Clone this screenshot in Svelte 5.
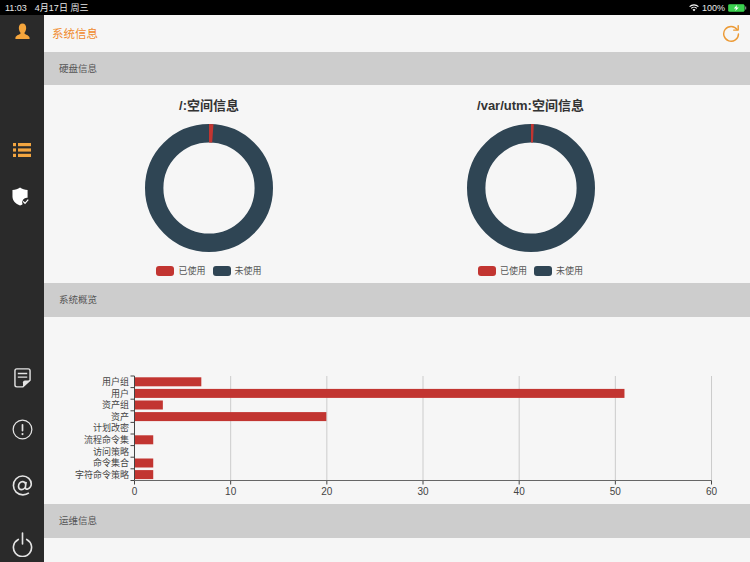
<script>
  const disks = [{ name: '/:空间信息', used: 4 }, { name: '/var/utm:空间信息', used: 2.5 }];
  const x0 = 90.5;
  const unit = 9.617;
  const rows = [
    ['用户组', 7], ['用户', 51], ['资产组', 3], ['资产', 20], ['计划改密', 0],
    ['流程命令集', 2], ['访问策略', 0], ['命令集合', 2], ['字符命令策略', 2]
  ];
  const ticks = [0, 10, 20, 30, 40, 50, 60];
  const rowH = 11.6;
  const top = 59;
  const axisY = 163.5;

  // arc along the top of the ring, from 12 o'clock clockwise
  function slice(deg) {
    const a = (deg * Math.PI) / 180;
    const x = 64 + 54.8 * Math.sin(a);
    const y = 64 - 54.8 * Math.cos(a);
    return `M64 9.2A54.8 54.8 0 0 1 ${x} ${y}`;
  }
</script>

<div class="page">
  <div class="status">
    <span class="time">11:03</span>
    <span class="date">4月17日 周三</span>
    <span class="spacer"></span>
    <svg class="wifi" viewBox="0 0 14 10" width="10" height="8">
      <path d="M7 9.6 4.9 7.3a3 3 0 0 1 4.2 0zM3.7 6.1 2.6 4.9a6.3 6.3 0 0 1 8.8 0l-1.100 1.200a4.700 4.700 0 0 0-6.600 0zM1.400 3.700.3 2.500a9.700 9.700 0 0 1 13.400 0l-1.100 1.200a8.100 8.100 0 0 0-11.200 0z" fill="#fff"/>
    </svg>
    <span class="pct">100%</span>
    <svg class="battery" viewBox="0 0 19 10" width="19" height="10">
      <rect x="0.300" y="1.500" width="16" height="7" rx="1.200" fill="#3bd14f" stroke="#3bd14f" stroke-width="0.600"/>
      <rect x="17.200" y="3.500" width="1" height="3" fill="#999"/>
      <path d="M9 2 5.800 5.500h2.200L7.300 8 10.800 4.500H8.500z" fill="#fff"/>
    </svg>
  </div>

  <div class="shell">
    <aside class="sidebar">
      <svg class="user" viewBox="0 0 18 18" width="15" height="17" preserveAspectRatio="none">
        <path d="M9 .5c2.900 0 4.400 2.100 4.400 4.700 0 2-.8 3.700-1.900 4.800v1.300c.6.900 5.500 1.500 6 4.200v1.500H.5v-1.500c.5-2.700 5.400-3.300 6-4.200V10C5.400 8.900 4.600 7.200 4.600 5.200 4.600 2.600 6.100.5 9 .5z" fill="#f5a53c"/>
      </svg>

      <div class="group mid">
        <svg viewBox="0 0 18 16" width="18" height="16">
          <g fill="#f2a540">
            <rect x="0" y="1" width="3" height="3.200"/><rect x="5" y="1" width="13" height="3.200"/>
            <rect x="0" y="6.400" width="3" height="3.200"/><rect x="5" y="6.400" width="13" height="3.200"/>
            <rect x="0" y="11.800" width="3" height="3.200"/><rect x="5" y="11.800" width="13" height="3.200"/>
          </g>
        </svg>
        <svg class="shield" viewBox="0 0 18 20" width="17" height="19">
          <path d="M8.500.5C6.300 2 3.500 2.900.5 3v7c0 4.300 3.300 7.800 8 9.500 1-.4 1.900-.8 2.700-1.300a5 5 0 0 1 5.300-6.900V3c-3-.1-5.800-1-8-2.500z" fill="#fff"/>
          <path d="M11.800 15.200l2 2 3.400-3.800" fill="none" stroke="#fff" stroke-width="1.300"/>
        </svg>
      </div>

      <div class="group low">
        <svg viewBox="0 0 18 22" width="17" height="20" preserveAspectRatio="none">
          <path d="M9.500 20.700H3a2 2 0 0 1-2-2V3a2 2 0 0 1 2-2h12a2 2 0 0 1 2 2v10.500z" fill="none" stroke="#e4e4e4" stroke-width="1.500" stroke-linejoin="round"/>
          <path d="M4 6h10M4 10h10" stroke="#e4e4e4" stroke-width="1.500"/>
          <path d="M9.500 20.700v-5a2 2 0 0 1 2-2H17z" fill="#e4e4e4"/>
        </svg>
        <svg class="alert" viewBox="0 0 22 22" width="21" height="21">
          <circle cx="11" cy="11" r="9.800" fill="none" stroke="#e4e4e4" stroke-width="1.300"/>
          <rect x="10.100" y="5.200" width="1.800" height="7.800" rx="0.900" fill="#e4e4e4"/>
          <circle cx="11" cy="15.800" r="1.100" fill="#e4e4e4"/>
        </svg>
        <svg class="mail" viewBox="0 0 22 22" width="21" height="21">
          <path d="M14.800 7.200 14 13.100c-.2 1.400 1.200 2.100 2.500 1.500 2.200-1 3.700-3 3.700-5.200 0-4.600-4-8.300-9-8.300C5.800 1.100 1.500 5.400 1.500 11c0 5.500 4.300 9.800 9.900 9.800 2.300 0 4.600-.7 6.300-2M14.300 10.500c0 2.600-2 4.800-4.300 4.800-2 0-3.200-1.500-3.200-3.500 0-2.700 2-4.900 4.200-4.900 2 0 3.300 1.500 3.300 3.600z" fill="none" stroke="#e4e4e4" stroke-width="1.700"/>
        </svg>
        <svg class="power" viewBox="0 0 22 26" width="21" height="25">
          <path d="M6.600 7.700a9.500 9.500 0 1 0 8.800 0" fill="none" stroke="#e4e4e4" stroke-width="1.700" stroke-linecap="round"/>
          <path d="M11 1v11.500" stroke="#e4e4e4" stroke-width="1.700" stroke-linecap="round"/>
        </svg>
      </div>
    </aside>

    <main class="content">
      <header class="head">
        <span class="title">系统信息</span>
        <svg viewBox="0 0 20 20" width="18" height="18">
          <path d="M16.800 6.200A8.200 8.200 0 1 0 18.300 11" fill="none" stroke="#ec9a35" stroke-width="1.600" stroke-linecap="round"/>
          <path d="M18 1.800v5h-5" fill="none" stroke="#ec9a35" stroke-width="1.600" stroke-linecap="round" stroke-linejoin="round"/>
        </svg>
      </header>

      <div class="bar">硬盘信息</div>
      <section class="disks">
        {#each disks as d}
          <div class="disk">
            <h3>{d.name}</h3>
            <svg class="donut" viewBox="0 0 128 128" width="128" height="128">
              <circle cx="64" cy="64" r="54.800" fill="none" stroke="#2f4554" stroke-width="18.400"/>
              <path d={slice(d.used)} fill="none" stroke="#c23531" stroke-width="18.400"/>
            </svg>
            <div class="legend">
              <span class="swatch red"></span><span>已使用</span>
              <span class="swatch navy"></span><span>未使用</span>
            </div>
          </div>
        {/each}
      </section>

      <div class="bar tall">系统概览</div>
      <section class="overview">
        <svg viewBox="0 0 706 187" width="706" height="187">
          {#each ticks as t}
            {#if t > 0}
              <line x1={x0 + t * unit} x2={x0 + t * unit} y1={top} y2={axisY} stroke="#ccc" stroke-width="1"/>
            {/if}
            <line x1={x0 + t * unit} x2={x0 + t * unit} y1={axisY} y2={axisY + 4} stroke="#444" stroke-width="1"/>
            <text class="tick" x={x0 + t * unit} y={axisY + 14} text-anchor="middle">{t}</text>
          {/each}
          {#each rows as r, i}
            <rect x={x0 - 0.5} y={top + i * rowH + 1.300} width={r[1] * unit} height="9" fill="#c23531"/>
            <line x1={x0 - 4} x2={x0} y1={top + i * rowH} y2={top + i * rowH} stroke="#444" stroke-width="1"/>
            <text class="cat" x={x0 - 5.500} y={top + i * rowH + 9} text-anchor="end">{r[0]}</text>
          {/each}
          <line x1={x0 - 4} x2={x0} y1={axisY} y2={axisY} stroke="#444" stroke-width="1"/>
          <line x1={x0} x2={x0} y1={top} y2={axisY} stroke="#444" stroke-width="1"/>
          <line x1={x0} x2={x0 + 60 * unit} y1={axisY} y2={axisY} stroke="#666" stroke-width="1"/>
        </svg>
      </section>

      <div class="bar tall">运维信息</div>
    </main>
  </div>
</div>

<style>
  :global(body) {
    margin: 0;
    background: #f6f6f6;
  }

  .page {
    width: 750px;
    height: 562px;
    overflow: hidden;
    display: flex;
    flex-direction: column;
    font-family: "Liberation Sans", "Noto Sans CJK SC", sans-serif;
  }

  .status {
    height: 15px;
    flex: none;
    background: #000;
    color: #e8e8e8;
    font-size: 9px;
    display: flex;
    align-items: center;
    padding: 0 3px 0 5px;
  }

  .date {
    margin-left: 8px;
  }

  .spacer {
    flex: 1;
  }

  .pct {
    margin: 0 3px 0 3px;
  }

  .shell {
    flex: 1;
    display: flex;
    min-height: 0;
  }

  .sidebar {
    width: 44px;
    flex: none;
    background: #2a2a2a;
    display: flex;
    flex-direction: column;
    align-items: center;
    padding-top: 8px;
  }

  .group {
    display: flex;
    flex-direction: column;
    align-items: center;
  }

  .mid {
    margin-top: 102px;
    gap: 29px;
  }

  .shield {
    margin-right: 3px;
  }

  .low {
    margin-top: 162px;
  }

  .alert {
    margin-top: 31px;
  }

  .mail {
    margin-top: 35px;
  }

  .power {
    margin-top: 36px;
  }

  .content {
    flex: 1;
    min-width: 0;
    background: #f6f6f6;
  }

  .head {
    height: 37px;
    box-sizing: border-box;
    display: flex;
    align-items: center;
    justify-content: space-between;
    padding: 0 10px 2px 8px;
  }

  .title {
    color: #f08a2c;
    font-size: 11.500px;
  }

  .bar {
    height: 33px;
    line-height: 33px;
    background: #cdcdcd;
    color: #555;
    font-size: 9.500px;
    padding-left: 15px;
  }

  .bar.tall {
    height: 34px;
    line-height: 34px;
  }

  .disks {
    height: 198px;
    display: flex;
    padding-left: 101px;
    gap: 193.500px;
  }

  .disk {
    width: 128px;
    display: flex;
    flex-direction: column;
    align-items: center;
  }

  h3 {
    margin: 13px 0 10px;
    font-size: 13px;
    line-height: 16px;
    font-weight: 700;
    color: #333;
    white-space: nowrap;
  }

  .donut {
    display: block;
  }

  .legend {
    margin-top: 13px;
    display: flex;
    align-items: center;
    font-size: 9px;
    line-height: 12px;
    color: #555;
    white-space: nowrap;
  }

  .swatch {
    width: 18px;
    height: 10px;
    border-radius: 3px;
    margin-right: 4px;
  }

  .swatch.navy {
    margin-left: 7px;
  }

  .red {
    background: #c23531;
  }

  .navy {
    background: #2f4554;
  }

  .overview {
    height: 187px;
  }

  .overview svg {
    display: block;
  }

  .cat {
    font-size: 9px;
    fill: #444;
  }

  .tick {
    font-size: 10px;
    fill: #444;
  }
</style>
